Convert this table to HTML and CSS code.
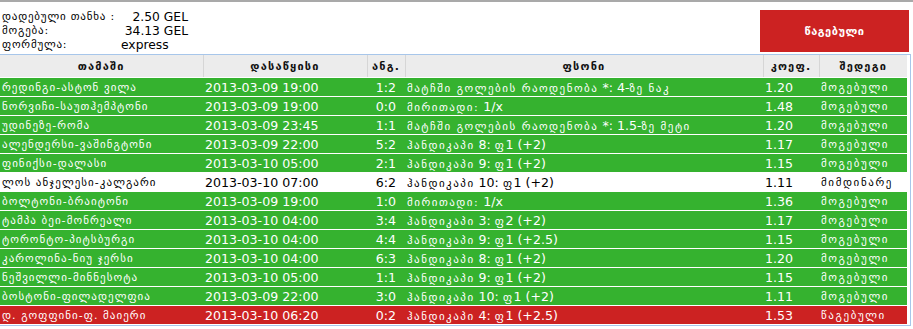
FILE: index.html
```html
<!DOCTYPE html>
<html lang="ka">
<head>
<meta charset="utf-8">
<title>ბილეთი</title>
<link rel="stylesheet" href="styles.css">
</head>
<body>
<div class="page">
  <div class="summary">
    <div class="info">
      <div class="line"><span class="lbl">დადებული თანხა :</span><span class="val">2.50 GEL</span></div>
      <div class="line"><span class="lbl">მოგება:</span><span class="val">34.13 GEL</span></div>
      <div class="line"><span class="lbl">ფორმულა:</span><span class="val val-express">express</span></div>
    </div>
    <div class="status-box">წაგებული</div>
  </div>
  <div class="table-wrap">
    <table class="bets">
      <colgroup>
        <col class="c-game"><col class="c-date"><col class="c-score"><col class="c-odd"><col class="c-coef"><col class="c-res">
      </colgroup>
      <thead>
        <tr><th>თამაში</th><th>დასაწყისი</th><th>ანგ.</th><th>ფსონი</th><th>კოეფ.</th><th>შედეგი</th></tr>
      </thead>
      <tbody>
        <tr class="won"><td class="ka">რედინგი-ასტონ ვილა</td><td>2013-03-09 19:00</td><td class="score">1:2</td><td><span class="g">მატჩში გოლების რაოდენობა</span> *: 4-<span class="g">ზე ნაკ</span></td><td>1.20</td><td class="ka res">მოგებული</td></tr>
        <tr class="won"><td class="ka">ნორვიჩი-საუთჰემპტონი</td><td>2013-03-09 19:00</td><td class="score">0:0</td><td><span class="g">მირითადი:</span> 1/x</td><td>1.48</td><td class="ka res">მოგებული</td></tr>
        <tr class="won"><td class="ka">უდინეზე-რომა</td><td>2013-03-09 23:45</td><td class="score">1:1</td><td><span class="g">მატჩში გოლების რაოდენობა</span> *: 1.5-<span class="g">ზე მეტი</span></td><td>1.20</td><td class="ka res">მოგებული</td></tr>
        <tr class="won"><td class="ka">ალენდერსი-ვაშინგტონი</td><td>2013-03-09 22:00</td><td class="score">5:2</td><td><span class="g">ჰანდიკაპი</span> 8: <span class="g">ფ</span>1 (+2)</td><td>1.17</td><td class="ka res">მოგებული</td></tr>
        <tr class="won"><td class="ka">ფინიქსი-დალასი</td><td>2013-03-10 05:00</td><td class="score">2:1</td><td><span class="g">ჰანდიკაპი</span> 9: <span class="g">ფ</span>1 (+2)</td><td>1.15</td><td class="ka res">მოგებული</td></tr>
        <tr class="open"><td class="ka">ლოს ანჯელესი-კალგარი</td><td>2013-03-10 07:00</td><td class="score">6:2</td><td><span class="g">ჰანდიკაპი</span> 10: <span class="g">ფ</span>1 (+2)</td><td>1.11</td><td class="ka res">მიმდინარე</td></tr>
        <tr class="won"><td class="ka">ბოლტონი-ბრაიტონი</td><td>2013-03-09 19:00</td><td class="score">1:0</td><td><span class="g">მირითადი:</span> 1/x</td><td>1.36</td><td class="ka res">მოგებული</td></tr>
        <tr class="won"><td class="ka">ტამპა ბეი-მონრეალი</td><td>2013-03-10 04:00</td><td class="score">3:4</td><td><span class="g">ჰანდიკაპი</span> 3: <span class="g">ფ</span>2 (+2)</td><td>1.17</td><td class="ka res">მოგებული</td></tr>
        <tr class="won"><td class="ka">ტორონტო-პიტსბურგი</td><td>2013-03-10 04:00</td><td class="score">4:4</td><td><span class="g">ჰანდიკაპი</span> 9: <span class="g">ფ</span>1 (+2.5)</td><td>1.15</td><td class="ka res">მოგებული</td></tr>
        <tr class="won"><td class="ka">კაროლინა-ნიუ ჯერსი</td><td>2013-03-10 04:00</td><td class="score">6:3</td><td><span class="g">ჰანდიკაპი</span> 8: <span class="g">ფ</span>1 (+2)</td><td>1.20</td><td class="ka res">მოგებული</td></tr>
        <tr class="won"><td class="ka">ნეშვილლი-მინნესოტა</td><td>2013-03-10 05:00</td><td class="score">1:1</td><td><span class="g">ჰანდიკაპი</span> 9: <span class="g">ფ</span>1 (+2)</td><td>1.15</td><td class="ka res">მოგებული</td></tr>
        <tr class="won"><td class="ka">ბოსტონი-ფილადელფია</td><td>2013-03-09 22:00</td><td class="score">3:0</td><td><span class="g">ჰანდიკაპი</span> 10: <span class="g">ფ</span>1 (+2)</td><td>1.11</td><td class="ka res">მოგებული</td></tr>
        <tr class="lost"><td class="ka">დ. გოფფინი-ფ. მაიერი</td><td>2013-03-10 06:20</td><td class="score">0:2</td><td><span class="g">ჰანდიკაპი</span> 4: <span class="g">ფ</span>1 (+2.5)</td><td>1.53</td><td class="ka res">წაგებული</td></tr>
      </tbody>
    </table>
  </div>
</div>
</body>
</html>
```

FILE: styles.css
```css
html, body {
  margin: 0;
  padding: 0;
  background: #ffffff;
}

.page {
  width: 913px;
  border-top: 2px solid #a9a9a9;
  font-family: "DejaVu Sans", sans-serif;
  color: #000;
}

.summary {
  display: flex;
  justify-content: space-between;
  align-items: flex-start;
  padding-top: 8px;
  height: 44px;
  box-sizing: content-box;
  width: 911px;
}

.info {
  padding-left: 2px;
}

.line {
  display: flex;
  height: 14px;
  line-height: 14px;
}

.lbl {
  width: 118px;
  font-size: 11px;
  letter-spacing: 0.8px;
}

.val {
  width: 68px;
  text-align: right;
  font-size: 12.3px;
}

.val-express {
  text-align: left;
  padding-left: 1px;
}

.status-box {
  width: 149px;
  height: 42px;
  background: #cc2222;
  color: #fff;
  font-weight: bold;
  font-size: 11px;
  letter-spacing: 0.5px;
  display: flex;
  align-items: center;
  justify-content: center;
  margin-right: 2px;
}

.table-wrap {
  width: 907px;
  border-top: 1px solid #a7c6ea;
  border-right: 1px solid #a7c6ea;
  border-bottom: 1px solid #a7c6ea;
  padding-right: 3px;
  background: #fff;
}

.bets {
  width: 907px;
  border-collapse: collapse;
  table-layout: fixed;
}

.c-game { width: 203px; }
.c-date { width: 164px; }
.c-score { width: 38px; }
.c-odd { width: 358px; }
.c-coef { width: 56px; }
.c-res { width: 88px; }

.bets th {
  height: 22px;
  padding: 0;
  background: #ececec;
  border-right: 1px solid #d6d6d6;
  border-bottom: 1px solid #ffffff;
  font-size: 11px;
  font-weight: bold;
  letter-spacing: 1.2px;
  color: #111;
  text-align: center;
}

.bets th:last-child {
  border-right: none;
}

.bets td {
  height: 18px;
  padding: 0 0 0 2px;
  border-bottom: 1px solid #ffffff;
  font-size: 12.6px;
  white-space: nowrap;
  overflow: hidden;
  color: #fff;
}

.bets td.ka {
  font-size: 11px;
  letter-spacing: 1.05px;
}

.bets td.res {
  letter-spacing: 1.6px;
}

.bets .g {
  font-size: 11px;
  letter-spacing: 1.5px;
}

.bets td.score {
  text-align: center;
  padding: 0;
}

.won td { background: #35b22f; }
.lost td { background: #cc2222; }
.open td { background: #ffffff; color: #000; }
```
